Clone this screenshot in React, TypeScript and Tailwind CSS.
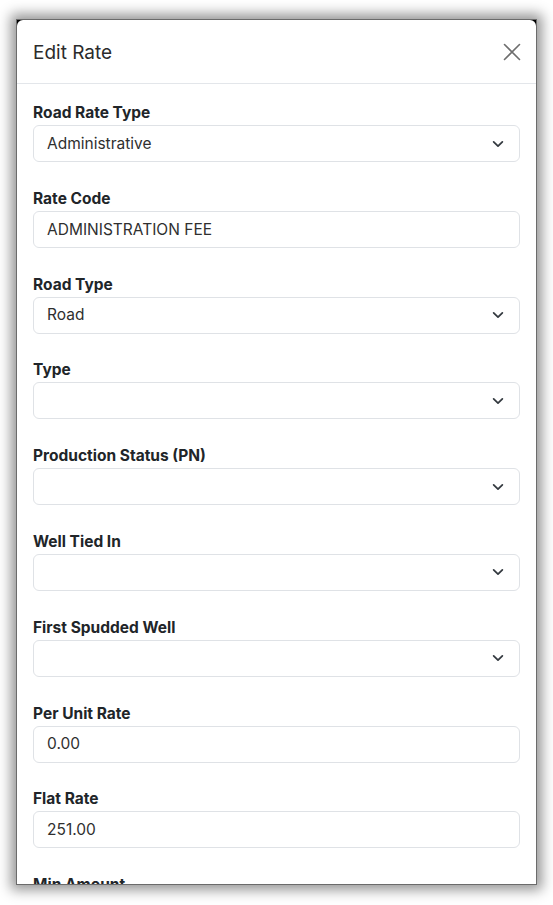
import React from "react";

const fields: { label: string; value: string; select: boolean }[] = [
  { label: "Road Rate Type", value: "Administrative", select: true },
  { label: "Rate Code", value: "ADMINISTRATION FEE", select: false },
  { label: "Road Type", value: "Road", select: true },
  { label: "Type", value: "", select: true },
  { label: "Production Status (PN)", value: "", select: true },
  { label: "Well Tied In", value: "", select: true },
  { label: "First Spudded Well", value: "", select: true },
  { label: "Per Unit Rate", value: "0.00", select: false },
  { label: "Flat Rate", value: "251.00", select: false },
  { label: "Min Amount", value: "", select: false },
];

function Chevron() {
  return (
    <svg width="14" height="14" viewBox="0 0 16 16" fill="none" className="shrink-0">
      <path d="M3 5.5l5 5 5-5" stroke="#343a40" strokeWidth="2" strokeLinecap="round" strokeLinejoin="round" />
    </svg>
  );
}

export default function App() {
  return (
    <div className="w-[553px] h-[905px] bg-white overflow-hidden pt-[19px] pl-[16px]" style={{ fontFamily: "Inter, 'Noto Sans', sans-serif" }}>
      <div className="w-[521px] h-[866px] bg-black border border-[#6b6b6b] shadow-[0_0_12px_5px_rgba(0,0,0,0.42)] overflow-hidden">
        <div className="h-full bg-white rounded-t-[6px] overflow-hidden flex flex-col">
          <div className="h-[64px] shrink-0 flex items-center justify-between px-[16px] border-b border-[#e3e6ea]">
            <div className="text-[19px] text-[#2b2b2b] leading-none mt-[1px]">Edit Rate</div>
            <svg width="18" height="18" viewBox="0 0 18 18" fill="none" className="-mr-[1px]">
              <path d="M1.5 1.5l15 15M16.5 1.5l-15 15" stroke="#6e6e6e" strokeWidth="1.6" strokeLinecap="round" />
            </svg>
          </div>
          <div className="px-[16px] pt-[18px] flex flex-col">
            {fields.map((f) => (
              <div key={f.label} className="mb-[25.8px]">
                <div className="text-[15.5px] leading-[22px] font-bold text-[#212529] mb-[1px]">{f.label}</div>
                <div className="h-[37px] border border-[#dfe2e6] rounded-[6px] flex items-center justify-between pl-[13px] pr-[14px]">
                  <span className="text-[15.5px] text-[#2f2f2f]">{f.value}</span>
                  {f.select && <Chevron />}
                </div>
              </div>
            ))}
          </div>
        </div>
      </div>
    </div>
  );
}
